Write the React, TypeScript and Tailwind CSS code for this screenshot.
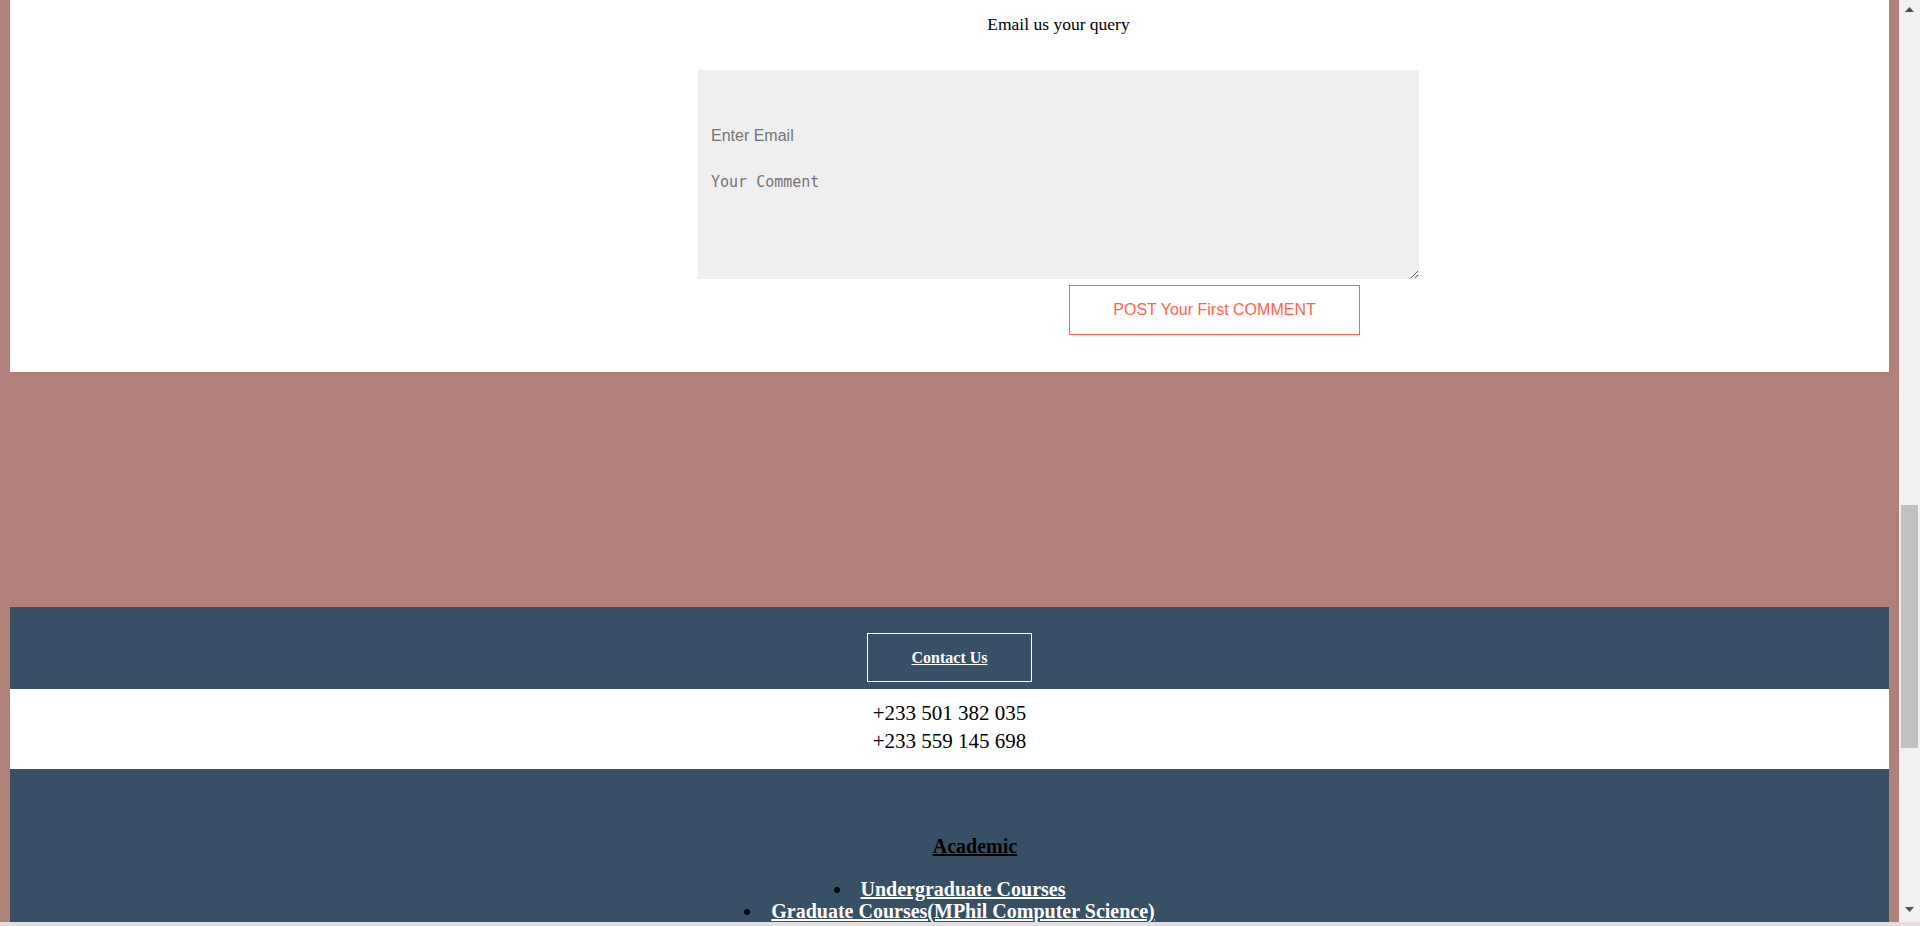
import { useState } from "react";

function Scrollbar() {
  return (
    <div className="w-[21px] shrink-0 bg-[#f1f1f1] flex flex-col">
      <div className="h-[17px] flex items-start justify-center pt-[7px]">
        <svg width="9" height="5" viewBox="0 0 9 5">
          <polygon points="4.5,0 9,5 0,5" fill="#505050" />
        </svg>
      </div>
      <div className="mt-[488px] mx-[2px] h-[243px] bg-[#c1c1c1]" />
      <div className="flex-1" />
      <div className="h-[17px] mb-[3px] flex items-end justify-center pb-[7px]">
        <svg width="9" height="5" viewBox="0 0 9 5">
          <polygon points="0,0 9,0 4.5,5" fill="#505050" />
        </svg>
      </div>
    </div>
  );
}

export default function App() {
  const [email, setEmail] = useState("");
  const [comment, setComment] = useState("");

  return (
    <div className="h-[926px] flex flex-col overflow-hidden font-['Liberation_Serif',serif]">
      <div className="flex flex-1 min-h-0">
        <div className="flex-1 min-w-0 bg-[#af817a] px-[10px] overflow-hidden">
          {/* Query form */}
          <section className="bg-white pt-[14px] pb-[37px]">
            <div className="w-[721px] ml-[688px]">
              <p className="text-center text-[17.5px] leading-[21px] text-black">Email us your query</p>
              <div className="mt-[35px] bg-[#efefef]">
                <input
                  type="email"
                  value={email}
                  onChange={(e) => setEmail(e.target.value)}
                  placeholder="Enter Email"
                  className="block w-full bg-transparent pt-[57px] pb-[9px] px-[13px] text-[16px] leading-[18px] font-['Liberation_Sans',sans-serif] outline-none placeholder:text-[#757575]"
                />
                <textarea
                  value={comment}
                  onChange={(e) => setComment(e.target.value)}
                  placeholder="Your Comment"
                  className="block w-full h-[125px] bg-transparent pt-[20px] px-[13px] text-[15px] leading-[17px] font-['DejaVu_Sans_Mono',monospace] outline-none placeholder:text-[#757575]"
                />
              </div>
              <div className="mt-[6px] ml-[371px]">
                <button className="w-[291px] h-[50px] border border-[#ff6347] text-[#ff6347] text-[16px] font-['Liberation_Sans',sans-serif]">
                  POST Your First COMMENT
                </button>
              </div>
            </div>
          </section>

          <div className="h-[235px]" />

          {/* Contact */}
          <section className="bg-[#385065] pt-[26px] pb-[7px] flex justify-center">
            <a
              href="#"
              className="w-[165px] h-[49px] border border-white flex items-center justify-center text-white font-bold underline text-[16px]"
            >
              Contact Us
            </a>
          </section>
          <section className="bg-white pt-[10px] pb-[14px] text-center text-black text-[21px] leading-[28px]">
            <p>+233 501 382 035</p>
            <p>+233 559 145 698</p>
          </section>

          {/* Links */}
          <section className="bg-[#385065] pt-[66px] pb-[40px] text-center">
            <h3 className="pl-[51px] text-[20px] leading-[23px] font-bold underline text-black">Academic</h3>
            <ul className="mt-[20px] list-disc list-inside text-[20px] leading-[22px] font-bold text-black">
              <li>
                <a href="#" className="text-white underline">Undergraduate Courses</a>
              </li>
              <li>
                <a href="#" className="text-white underline">Graduate Courses(MPhil Computer Science)</a>
              </li>
              <li>
                <a href="#" className="text-white underline">Research</a>
              </li>
            </ul>
          </section>
        </div>
        <Scrollbar />
      </div>
      <div className="h-[4px] bg-[#e3dddd]" />
    </div>
  );
}
